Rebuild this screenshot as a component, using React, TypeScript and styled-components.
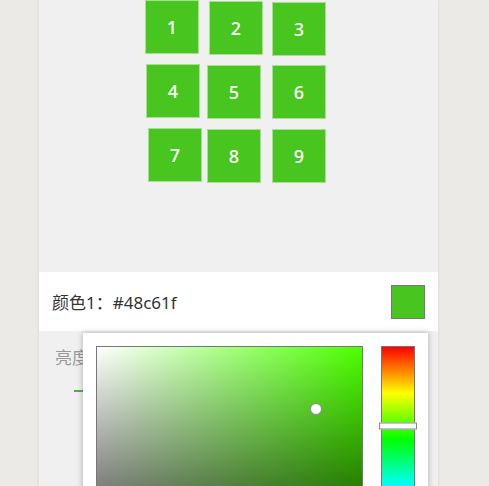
import React from "react";
import styled, { createGlobalStyle } from "styled-components";

const Global = createGlobalStyle`
  html, body { margin: 0; padding: 0; background: #ebeae6; overflow: hidden; }
  body { font-family: "Noto Sans", "Noto Sans CJK SC", sans-serif; }
`;

const Card = styled.div`
  position: relative;
  margin-left: 39px;
  width: 399px;
  height: 486px;
  background: #f0f0f0;
  box-shadow: 0 0 3px rgba(0, 0, 0, 0.1);
`;

const Board = styled.div`
  height: 272px;
  display: flex;
  justify-content: flex-start;
  padding-left: 106px;
  box-sizing: border-box;
`;

const Grid = styled.div`
  display: grid;
  grid-template-columns: repeat(3, 54px);
  grid-auto-rows: 54px;
  column-gap: 10px;
  row-gap: 10px;
  align-content: start;
`;

const Tile = styled.div<{ $dx: number; $dy: number }>`
  box-sizing: border-box;
  width: 54px;
  height: 54px;
  background: #48c61f;
  border: 1px solid #a6df93;
  color: #fff;
  font-family: "Noto Sans", "Open Sans", sans-serif;
  font-size: 18px;
  font-weight: 500;
  display: flex;
  align-items: center;
  justify-content: center;
  transform: translate(${(p) => p.$dx}px, ${(p) => p.$dy}px);
`;

const ColorRow = styled.div`
  height: 59px;
  background: #fff;
  display: flex;
  align-items: center;
  justify-content: space-between;
  padding: 0 13px;
`;

const ColorLabel = styled.span`
  font-size: 17px;
  color: #333;
  font-family: "Noto Sans", "Noto Sans CJK SC", sans-serif;
`;

const Swatch = styled.div<{ $color: string }>`
  box-sizing: border-box;
  width: 34px;
  height: 34px;
  background: ${(p) => p.$color};
  border: 1px solid #777;
`;

const Section = styled.div`
  padding: 14px 16px 0;
`;

const Label = styled.div`
  font-size: 17px;
  color: #999;
  line-height: 24px;
  font-family: "Noto Sans CJK SC", sans-serif;
`;

const Track = styled.div`
  margin: 21px 0 0 19px;
  width: 300px;
  height: 2px;
  background: #48b83a;
`;

const Popup = styled.div`
  position: absolute;
  left: 44px;
  top: 333px;
  width: 345px;
  box-sizing: border-box;
  padding: 13px;
  background: #fff;
  box-shadow: 0 0 6px rgba(0, 0, 0, 0.3);
  display: flex;
  gap: 18px;
`;

const SatBox = styled.div<{ $hue: number }>`
  position: relative;
  box-sizing: border-box;
  width: 267px;
  height: 280px;
  border: 1px solid #777;
  background: linear-gradient(to top, #000, rgba(0, 0, 0, 0)),
    linear-gradient(to right, #fff, rgba(255, 255, 255, 0)),
    hsl(${(p) => p.$hue}, 100%, 50%);
`;

const Knob = styled.div`
  position: absolute;
  width: 12px;
  height: 12px;
  border-radius: 50%;
  background: #fff;
  border: 1px solid #888;
  box-sizing: border-box;
  transform: translate(-50%, -50%);
`;

const HueBar = styled.div`
  position: relative;
  box-sizing: border-box;
  width: 34px;
  height: 280px;
  border: 1px solid #777;
  background: linear-gradient(
    to bottom,
    #f00 0%,
    #ff0 16.67%,
    #0f0 33.33%,
    #0ff 50%,
    #00f 66.67%,
    #f0f 83.33%,
    #f00 100%
  );
`;

const HueHandle = styled.div`
  position: absolute;
  left: -3px;
  right: -3px;
  height: 7px;
  box-sizing: border-box;
  background: #fff;
  border: 1px solid #888;
  transform: translateY(-50%);
`;

const tiles = [
  { n: 1, dx: 0, dy: 0 },
  { n: 2, dx: 0, dy: 1 },
  { n: 3, dx: -1, dy: 2 },
  { n: 4, dx: 1, dy: 0 },
  { n: 5, dx: -2, dy: 1 },
  { n: 6, dx: -1, dy: 1 },
  { n: 7, dx: 3, dy: 0 },
  { n: 8, dx: -2, dy: 1 },
  { n: 9, dx: -1, dy: 1 },
];

export default function App() {
  const hue = 102;
  return (
    <>
      <Global />
      <Card>
        <Board>
          <Grid>
            {tiles.map((t) => (
              <Tile key={t.n} $dx={t.dx} $dy={t.dy}>
                {t.n}
              </Tile>
            ))}
          </Grid>
        </Board>
        <ColorRow>
          <ColorLabel>颜色1：#48c61f</ColorLabel>
          <Swatch $color="#48c61f" />
        </ColorRow>
        <Section>
          <Label>亮度</Label>
          <Track />
        </Section>
        <Popup>
          <SatBox $hue={hue}>
            <Knob style={{ left: "82.5%", top: "22.4%" }} />
          </SatBox>
          <HueBar>
            <HueHandle style={{ top: `${(hue / 360) * 100}%` }} />
          </HueBar>
        </Popup>
      </Card>
    </>
  );
}
